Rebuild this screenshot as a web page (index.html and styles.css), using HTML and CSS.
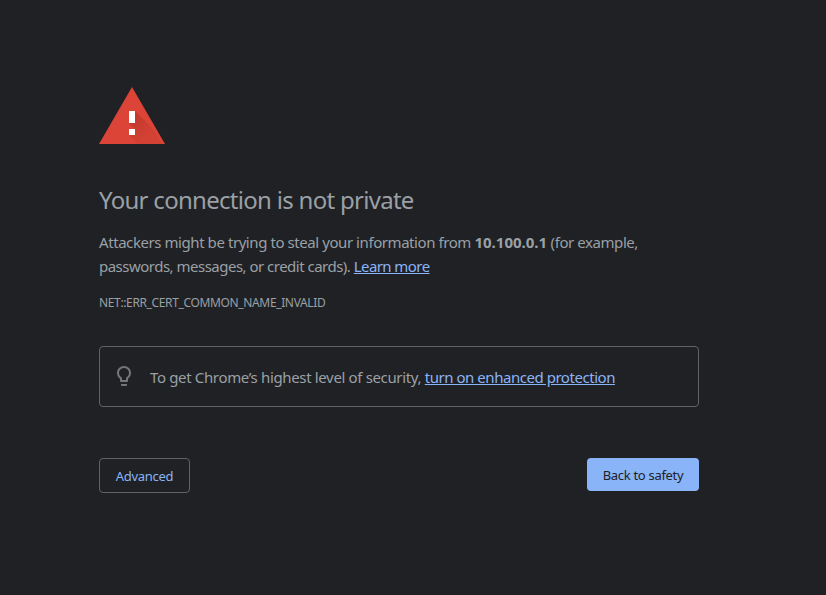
FILE: index.html
```html
<!DOCTYPE html>
<html lang="en">
<head>
<meta charset="utf-8">
<title>Privacy error</title>
<link rel="stylesheet" href="styles.css">
</head>
<body>
<main class="interstitial">
  <svg class="warning" viewBox="0 0 66 57" aria-hidden="true">
    <defs><linearGradient id="shade" gradientUnits="userSpaceOnUse" x1="32" y1="28" x2="50" y2="46"><stop stop-color="#bf392c"/><stop offset="1" stop-color="#d34034"/></linearGradient></defs>
    <path fill="#db4437" d="M33 0 66 57H0z"/>
    <path fill="url(#shade)" d="M36 24 54 42 63 57H39L30 48 36 42 30 36z"/>
    <path fill="#fff" d="M30 24h6v12h-6zM30 42h6v6h-6z"/>
  </svg>
  <h1>Your connection is not private</h1>
  <p class="message">Attackers might be trying to steal your information from <strong>10.100.0.1</strong> (for example,<br><span class="continued">passwords, messages, or credit cards). <a href="#">Learn more</a></span></p>
  <div class="code">NET::ERR_CERT_COMMON_NAME_INVALID</div>
  <section class="tip">
    <svg class="bulb" viewBox="0 0 24 24" aria-hidden="true"><path fill="#74777a" d="M9 21c0 .5.4 1 1 1h4c.6 0 1-.5 1-1v-1H9v1zm3-19C8.100 2 5 5.100 5 9c0 2.400 1.200 4.500 3 5.700V17c0 .5.400 1 1 1h6c.6 0 1-.5 1-1v-2.300c1.800-1.300 3-3.400 3-5.700 0-3.900-3.100-7-7-7zm2.900 11.100l-.9.600V16h-4v-2.300l-.9-.6C7.800 12.200 7 10.600 7 9c0-2.800 2.200-5 5-5s5 2.200 5 5c0 1.600-.8 3.200-2.100 4.100z"/></svg>
    <p>To get Chrome’s highest level of security, <a href="#">turn on enhanced protection</a></p>
  </section>
  <div class="actions">
    <button class="secondary">Advanced</button>
    <button class="primary">Back to safety</button>
  </div>
</main>
</body>
</html>
```
FILE: styles.css
```css
body { margin: 0; background: #202124; color: #9aa0a6; font: 15px/24px "Noto Sans", sans-serif; }
.interstitial { width: 600px; margin: 0 0 0 99px; padding-top: 87px; }
.warning { display: block; width: 66px; height: 57px; }
h1 { margin: 41px 0 16px; font-size: 24px; line-height: 29px; font-weight: 400; letter-spacing: -.71px; white-space: nowrap; }
p { margin: 0; white-space: nowrap; }
a { color: #8ab4f8; }
.message { letter-spacing: -.43px; }
.message strong { letter-spacing: 0; }
.continued { letter-spacing: -.51px; }
.continued a { letter-spacing: -.58px; }
.code { margin-top: 13px; font-size: 12px; line-height: 24px; letter-spacing: -.36px; }
.tip { display: flex; align-items: center; box-sizing: border-box; height: 61px; margin-top: 31px; padding: 0 12px; gap: 14px; border: 1px solid #5f6368; border-radius: 4px; }
.tip p { letter-spacing: -.35px; }
.tip a { letter-spacing: -.46px; }
.bulb { width: 24px; height: 24px; margin-bottom: 2px; }
.actions { display: flex; justify-content: space-between; align-items: flex-start; margin-top: 51px; }
button { box-sizing: border-box; font: 13px/17px "Noto Sans", sans-serif; padding: 2px 0 0; border-radius: 4px; letter-spacing: -.3px; }
.secondary { width: 91px; height: 35px; border: 1px solid #5f6368; color: #8ab4f8; background: transparent; }
.primary { width: 112px; height: 33px; border: 0; color: #202124; background: #8ab4f8; }
```
